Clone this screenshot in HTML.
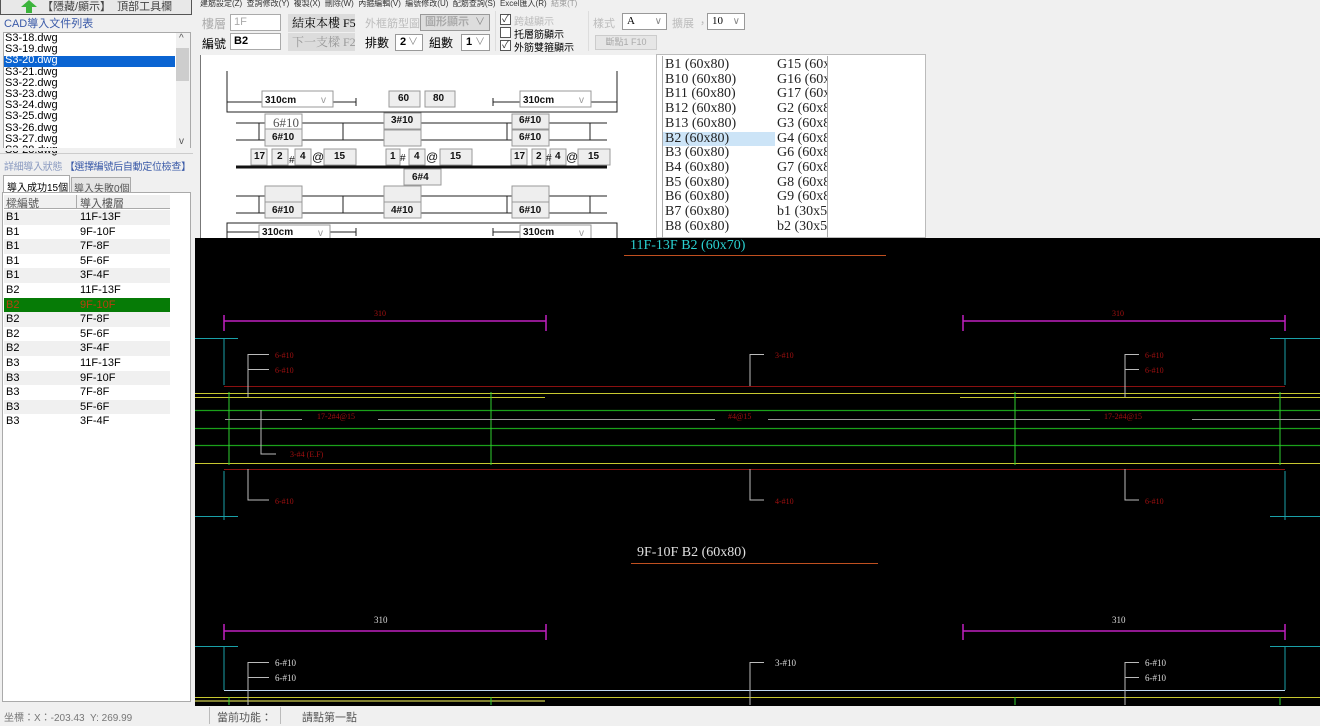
<!DOCTYPE html>
<html><head><meta charset="utf-8"><style>
*{margin:0;padding:0;box-sizing:border-box}
body{width:1320px;height:726px;overflow:hidden;background:#f0f0f0;font-family:"Liberation Sans","Noto Sans CJK TC",sans-serif;font-size:11px;color:#000;position:relative}
.a{position:absolute;white-space:nowrap}
.inp{position:absolute;background:#fff;border:1px solid #aaa;font-size:11px;padding-left:3px;line-height:15px}
.cb{position:absolute;background:#fff;border:1px solid #999;font-size:11px;padding-left:4px;line-height:15px;font-weight:bold}
.cb:after{content:"\2228";position:absolute;right:4px;top:0;color:#888;font-weight:normal;font-size:10px}
.chk{position:absolute;width:11px;height:11px;border:1px solid #555;background:#fff;font-size:10px;line-height:9px;text-align:center;color:#333}
.row{position:absolute;left:4px;width:166px;height:14.6px;font-size:11px;line-height:14.6px}
.row span{position:absolute;left:2px}.row b{position:absolute;left:76px;font-weight:normal}
.li{position:absolute;font-family:"Liberation Serif",serif;font-size:14px;line-height:14.7px;color:#222}
</style></head><body>
<!-- left panel -->
<div class="a" style="left:0;top:0;width:192px;height:15px;background:#e8e8e8;border:1px solid #555;border-top:none"></div>
<svg class="a" style="left:20px;top:0" width="18" height="14"><path d="M9 0 L17 7 L12 7 L12 13 L6 13 L6 7 L1 7Z" fill="#3cb43c"/></svg>
<div class="a" style="left:42px;top:-2px;font-size:11px;color:#444">【隱藏/顯示】&nbsp; 頂部工具欄</div>
<div class="a" style="left:4px;top:15px;color:#3a5aa8;font-size:11px">CAD導入文件列表</div>
<div class="a" style="left:3px;top:32px;width:188px;height:118px;background:#fff;border:1px solid #aaa"></div>
<div class="a" style="left:176px;top:33px;width:14px;height:116px;background:#f0f0f0"></div>
<div class="a" style="left:176px;top:48px;width:13px;height:33px;background:#cdcdcd"></div>
<div class="a" style="left:179px;top:33px;font-size:10px;color:#555">^</div>
<div class="a" style="left:179px;top:136px;font-size:10px;color:#555">v</div>
<div class="a" style="left:4px;top:56px;width:171px;height:11px;background:#0a64d2"></div>
<div class="a" style="left:5px;top:33px;font-size:11px;line-height:11.2px">S3-18.dwg<br>S3-19.dwg<br><span style="color:#fff">S3-20.dwg</span><br>S3-21.dwg<br>S3-22.dwg<br>S3-23.dwg<br>S3-24.dwg<br>S3-25.dwg<br>S3-26.dwg<br>S3-27.dwg<br>S3-28.dwg</div>
<div class="a" style="left:3px;top:148px;width:188px;height:3px;background:#f0f0f0"></div>
<div class="a" style="left:0;top:153px;width:193px;height:1px;background:#ccc"></div>
<div class="a" style="left:4px;top:158px;color:#8a9ac0;font-size:10px;letter-spacing:-0.3px">詳細導入狀態 <span style="color:#3a5aa8">【選擇編號后自動定位檢查】</span></div>
<div class="a" style="left:3px;top:175px;width:67px;height:18px;background:#fff;border:1px solid #aaa;border-bottom:none;padding:3px 3px;font-size:10px">導入成功15個</div>
<div class="a" style="left:71px;top:177px;width:60px;height:16px;background:#e4e4e4;border:1px solid #aaa;padding:2px 2px;font-size:10px;color:#555">導入失敗0個</div>
<div class="a" style="left:2px;top:192px;width:189px;height:510px;background:#fff;border:1px solid #aaa"></div>
<div class="a" style="left:4px;top:195px;width:166px;height:14px;background:#f0f0f0;border-bottom:1px solid #aaa"></div>
<div class="a" style="left:76px;top:195px;width:1px;height:14px;background:#aaa"></div>
<div class="a" style="left:6px;top:195px;color:#555">樑編號</div><div class="a" style="left:80px;top:195px;color:#555">導入樓層</div>
<div class="row" style="top:210px;background:#f0f0f0"><span>B1</span><b>11F-13F</b></div>
<div class="row" style="top:224.6px"><span>B1</span><b>9F-10F</b></div>
<div class="row" style="top:239.2px;background:#f0f0f0"><span>B1</span><b>7F-8F</b></div>
<div class="row" style="top:253.8px"><span>B1</span><b>5F-6F</b></div>
<div class="row" style="top:268.4px;background:#f0f0f0"><span>B1</span><b>3F-4F</b></div>
<div class="row" style="top:283px"><span>B2</span><b>11F-13F</b></div>
<div class="row" style="top:297.6px;background:#067b06;color:#b84010"><span>B2</span><b>9F-10F</b></div>
<div class="row" style="top:312.2px;background:#f0f0f0"><span>B2</span><b>7F-8F</b></div>
<div class="row" style="top:326.8px"><span>B2</span><b>5F-6F</b></div>
<div class="row" style="top:341.4px;background:#f0f0f0"><span>B2</span><b>3F-4F</b></div>
<div class="row" style="top:356px"><span>B3</span><b>11F-13F</b></div>
<div class="row" style="top:370.6px;background:#f0f0f0"><span>B3</span><b>9F-10F</b></div>
<div class="row" style="top:385.2px"><span>B3</span><b>7F-8F</b></div>
<div class="row" style="top:399.8px;background:#f0f0f0"><span>B3</span><b>5F-6F</b></div>
<div class="row" style="top:414.4px"><span>B3</span><b>3F-4F</b></div>
<!-- top toolbar -->
<div class="a" style="left:193px;top:0;width:1127px;height:54px;background:#f0f0f0"></div>
<div class="a" style="left:200px;top:-2px;font-size:8px;color:#333;letter-spacing:0">建筋設定(Z)&nbsp; 查詢修改(Y)&nbsp; 複製(X)&nbsp; 刪除(W)&nbsp; 內箍編輯(V)&nbsp; 編號修改(U)&nbsp; 配筋查詢(S)&nbsp; Excel匯入(R)&nbsp; <span style="color:#999">結束(T)</span></div>
<div class="a" style="left:202px;top:15px;font-size:12px;color:#aaa">樓層</div>
<div class="inp" style="left:230px;top:14px;width:51px;height:17px;color:#aaa">1F</div>
<div class="a" style="left:288px;top:14px;width:67px;height:18px;background:#dcdcdc;font-family:'Liberation Serif','Noto Serif CJK SC',serif;font-size:12px;line-height:18px;padding-left:4px">結束本樓 F5</div>
<div class="a" style="left:365px;top:15px;font-size:11px;color:#bbb">外框筋型圖</div>
<div class="cb" style="left:420px;top:14px;width:70px;height:17px;background:#ddd;color:#aaa">圖形顯示</div>
<div class="a" style="left:495px;top:11px;width:1px;height:40px;background:#ddd"></div>
<div class="chk" style="left:500px;top:14px">✓</div><div class="a" style="left:514px;top:13px;color:#bbb;font-size:10px">跨越顯示</div>
<div class="chk" style="left:500px;top:27px"></div><div class="a" style="left:514px;top:26px;font-size:10px">托層筋顯示</div>
<div class="chk" style="left:500px;top:40px">✓</div><div class="a" style="left:514px;top:39px;font-size:10px">外筋雙箍顯示</div>
<div class="a" style="left:588px;top:11px;width:1px;height:40px;background:#ddd"></div>
<div class="a" style="left:593px;top:15px;color:#bbb">樣式</div>
<div class="cb" style="left:622px;top:13px;width:45px;height:17px;font-weight:normal;font-family:'Liberation Serif',serif">A</div>
<div class="a" style="left:672px;top:15px;color:#bbb">擴展 ，</div>
<div class="cb" style="left:707px;top:13px;width:38px;height:17px;font-weight:normal;font-family:'Liberation Serif',serif">10</div>
<div class="a" style="left:595px;top:35px;width:62px;height:15px;background:#e6e6e6;border:1px solid #ccc;color:#aaa;font-size:9px;text-align:center;line-height:13px">斷點1 F10</div>
<div class="a" style="left:202px;top:35px;font-size:12px">編號</div>
<div class="inp" style="left:230px;top:33px;width:51px;height:17px;font-weight:bold">B2</div>
<div class="a" style="left:288px;top:33px;width:67px;height:18px;background:#dcdcdc;font-family:'Liberation Serif','Noto Serif CJK SC',serif;font-size:12px;line-height:18px;padding-left:4px;color:#999">下一支樑 F2</div>
<div class="a" style="left:365px;top:34px;font-size:12px">排數</div>
<div class="cb" style="left:395px;top:34px;width:28px;height:17px">2</div>
<div class="a" style="left:429px;top:34px;font-size:12px">組數</div>
<div class="cb" style="left:461px;top:34px;width:29px;height:17px">1</div>
<!-- diagram panel -->
<div class="a" style="left:193px;top:54px;width:1127px;height:184px;background:#f0f0f0"></div>
<div class="a" style="left:200px;top:55px;width:456px;height:183px;background:#fff;border-left:1px solid #777"></div>
<div class="a" style="left:656px;top:54px;width:270px;height:184px;background:#fff;border:1px solid #bbb"></div>
<svg class="a" style="left:0;top:0" width="660" height="240" font-family="Liberation Sans" font-size="10" font-weight="bold">
<g stroke="#222" fill="none" stroke-width="1">
<path d="M227 71V112H617V71"/>
<path d="M227 102H262M333 102H356M356 98V106M520 102H493M493 98V106M591 102H617"/>
<path d="M236 123H607M236 140H607M259 123V140M343 123V140M507 123V140M590 123V140"/>
<path d="M236 196H607M236 213H607M259 196V213M343 196V213M507 196V213M590 196V213"/>
<path d="M227 238V223H617V238M227 232H259M330 232H356M356 228V236M520 232H493M493 228V236"/>
</g>
<path d="M236 167H607" stroke="#111" stroke-width="3"/>
<g stroke="#999" fill="#eee">
<rect x="262" y="91" width="71" height="16" fill="#fff"/><rect x="520" y="91" width="71" height="16" fill="#fff"/>
<rect x="389" y="91" width="31" height="16"/><rect x="425" y="91" width="30" height="16"/>
<rect x="265" y="114" width="37" height="15" fill="#fff"/><rect x="265" y="129" width="37" height="17"/>
<rect x="384" y="113" width="37" height="16"/><rect x="384" y="130" width="37" height="16"/>
<rect x="512" y="114" width="37" height="15"/><rect x="512" y="130" width="37" height="16"/>
<rect x="251" y="149" width="16" height="16"/><rect x="272" y="149" width="16" height="16"/><rect x="295" y="149" width="16" height="16"/><rect x="324" y="149" width="32" height="16"/>
<rect x="386" y="149" width="14" height="16"/><rect x="409" y="149" width="16" height="16"/><rect x="440" y="149" width="32" height="16"/>
<rect x="511" y="149" width="16" height="16"/><rect x="532" y="149" width="14" height="16"/><rect x="550" y="149" width="16" height="16"/><rect x="578" y="149" width="32" height="16"/>
<rect x="404" y="169" width="37" height="16"/>
<rect x="265" y="186" width="37" height="16"/><rect x="265" y="202" width="37" height="16"/>
<rect x="384" y="186" width="37" height="16"/><rect x="384" y="202" width="37" height="16"/>
<rect x="512" y="186" width="37" height="16"/><rect x="512" y="202" width="37" height="16"/>
<rect x="259" y="225" width="71" height="15" fill="#fff"/><rect x="520" y="225" width="71" height="15" fill="#fff"/>
</g>
<g fill="#111">
<text x="265" y="103">310cm</text><text x="523" y="103">310cm</text><text x="262" y="235">310cm</text><text x="523" y="235">310cm</text>
<text x="398" y="101">60</text><text x="433" y="101">80</text>
<text x="273" y="127" font-weight="normal" font-size="13" fill="#555" font-family="Liberation Serif">6#10</text>
<text x="272" y="140">6#10</text><text x="391" y="123">3#10</text><text x="519" y="123">6#10</text><text x="519" y="140">6#10</text>
<text x="254" y="159">17</text><text x="277" y="159">2</text><text x="289" y="163" font-weight="normal">#</text><text x="300" y="159">4</text><text x="312" y="161" font-weight="normal" font-size="12">@</text><text x="334" y="159">15</text>
<text x="390" y="159">1</text><text x="400" y="161" font-weight="normal">#</text><text x="414" y="159">4</text><text x="426" y="161" font-weight="normal" font-size="12">@</text><text x="450" y="159">15</text>
<text x="514" y="159">17</text><text x="536" y="159">2</text><text x="546" y="161" font-weight="normal">#</text><text x="555" y="159">4</text><text x="566" y="161" font-weight="normal" font-size="12">@</text><text x="588" y="159">15</text>
<text x="412" y="180">6#4</text>
<text x="272" y="213">6#10</text><text x="391" y="213">4#10</text><text x="519" y="213">6#10</text>
<g font-weight="normal" fill="#999"><text x="321" y="103">v</text><text x="579" y="103">v</text><text x="318" y="236">v</text><text x="579" y="236">v</text></g>
</g>
</svg>
<div class="a" style="left:663px;top:132px;width:112px;height:14px;background:#cce4f7"></div>
<div class="a" style="left:662px;top:56px;width:166px;height:182px;border:1px solid #aaa;border-top:none;border-bottom:none"></div>
<div class="li" style="left:665px;top:58px">B1 (60x80)<br>B10 (60x80)<br>B11 (60x80)<br>B12 (60x80)<br>B13 (60x80)<br>B2 (60x80)<br>B3 (60x80)<br>B4 (60x80)<br>B5 (60x80)<br>B6 (60x80)<br>B7 (60x80)<br>B8 (60x80)</div>
<div class="a" style="left:777px;top:58px;width:50px;overflow:hidden"><div class="li" style="position:static">G15 (60x80<br>G16 (60x80<br>G17 (60x80<br>G2 (60x80<br>G3 (60x80<br>G4 (60x80<br>G6 (60x80<br>G7 (60x80<br>G8 (60x80<br>G9 (60x80<br>b1 (30x50<br>b2 (30x50</div></div>
<!-- CAD -->
<svg class="a" style="left:195px;top:238px;background:#000" width="1125" height="468" font-family="Liberation Serif">
<g transform="translate(-195,-238)">
<text x="630" y="249" fill="#2ad0d0" font-size="14">11F-13F B2 (60x70)</text>
<path d="M624 255.5H886" stroke="#c05020"/>
<g stroke="#c020c0" stroke-width="1.5"><path d="M224 321H546M224 315V331M546 315V331M963 321H1285M963 315V331M1285 315V331"/></g>
<g fill="#a01010" font-size="8"><text x="374" y="316">310</text><text x="1112" y="316">310</text>
<text x="275" y="358">6-#10</text><text x="275" y="373">6-#10</text><text x="775" y="358">3-#10</text><text x="1145" y="358">6-#10</text><text x="1145" y="373">6-#10</text>
<text x="317" y="419">17-2#4@15</text><text x="728" y="419">#4@15</text><text x="1104" y="419">17-2#4@15</text><text x="290" y="457">3-#4 (E.F)</text>
<text x="275" y="504">6-#10</text><text x="775" y="504">4-#10</text><text x="1145" y="504">6-#10</text></g>
<g stroke="#1aa0a8" fill="none"><path d="M195 338.5H238M224 338V385M1270 338.5H1320M1285 338V385M224 471V520M195 516.5H238M1285 471V520M1270 516.5H1320"/></g>
<path d="M224 386.5H1285M224 469.5H1285" stroke="#8a1010"/>
<path d="M195 393.5H1320M195 463.5H1320" stroke="#c8c830"/>
<path d="M195 397.5H545M960 397.5H1320" stroke="#c8c830"/>
<path d="M195 410.5H1320M195 428.5H1320M195 445.5H1320" stroke="#1aa01a" stroke-width="1.3"/>
<path d="M229 392V465M491 392V465M1015 392V465M1280 392V465" stroke="#30d030"/>
<path d="M225 419.5H302M378 419.5H715M768 419.5H1090M1192 419.5H1320" stroke="#999"/>
<g stroke="#bbb" fill="none"><path d="M269 354.5H248V397M248 369.5H269M764 354.5H750V386M1139 354.5H1125V397M1125 369.5H1139M261 410V454H276M248 469V500H269M750 469V500H764M1125 469V500H1139"/></g>
<text x="637" y="556" fill="#e0e0e0" font-size="14">9F-10F B2 (60x80)</text>
<path d="M631 563.5H878" stroke="#c05020"/>
<g stroke="#c020c0" stroke-width="1.5"><path d="M224 631H546M224 624V640M546 624V640M963 631H1285M963 624V640M1285 624V640"/></g>
<g fill="#ddd" font-size="9"><text x="374" y="623">310</text><text x="1112" y="623">310</text>
<text x="275" y="666">6-#10</text><text x="275" y="681">6-#10</text><text x="775" y="666">3-#10</text><text x="1145" y="666">6-#10</text><text x="1145" y="681">6-#10</text></g>
<g stroke="#1aa0a8" fill="none"><path d="M195 646.5H238M224 646V690M1270 646.5H1320M1285 646V690"/></g>
<path d="M224 690.5H1285" stroke="#c0d8f0"/>
<path d="M195 697.5H1320" stroke="#c8c830"/><path d="M195 701H545" stroke="#808030" stroke-width="2"/>
<g stroke="#bbb" fill="none"><path d="M269 662.5H248V705M248 677.5H269M764 662.5H750V705M1139 662.5H1125V705M1125 677.5H1139"/></g>
<path d="M229 697V705M491 697V705M1015 697V705M1280 697V705" stroke="#30d030"/>
</g></svg>
<!-- status -->
<div class="a" style="left:0;top:706px;width:1320px;height:20px;background:#f0f0f0"></div>
<div class="a" style="left:4px;top:709px;color:#777;font-size:10px">坐標：X：-203.43&nbsp; Y: 269.99</div>
<div class="a" style="left:209px;top:707px;width:1px;height:17px;background:#bbb"></div>
<div class="a" style="left:217px;top:709px;color:#555;font-size:11px">當前功能：</div>
<div class="a" style="left:280px;top:707px;width:1px;height:17px;background:#bbb"></div>
<div class="a" style="left:302px;top:709px;color:#555;font-size:11px">請點第一點</div>
</body></html>
